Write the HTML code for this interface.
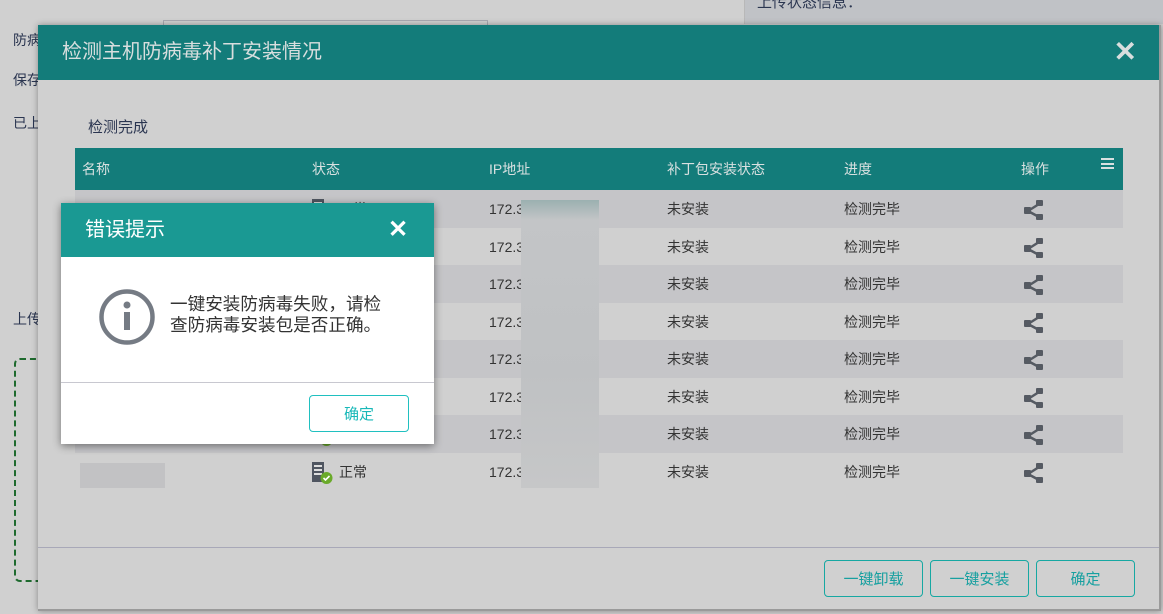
<!DOCTYPE html>
<html><head><meta charset="utf-8"><style>
*{margin:0;padding:0;box-sizing:border-box}
body{width:1163px;height:614px;overflow:hidden;background:#d0d0d0;position:relative;font-family:"Liberation Sans","Noto Sans CJK SC",sans-serif;color:#333;font-size:14px}
.abs{position:absolute}
.bgt{color:#2a3550;font-size:14px}
.modal{left:38px;top:25px;width:1123px;height:586px;background:#d0d0d0;box-shadow:0 0 6px rgba(0,0,0,.35);border-right:2px solid #9a9a9a;border-bottom:2px solid #9a9a9a}
.mh{left:0;top:0;width:100%;height:55px;background:#137c7a;color:#d8dede;font-size:20px;line-height:55px;padding-left:24px}
.th{left:37px;top:123px;width:1048px;height:42px;background:#137c7a;color:#d8e0e0;font-size:14px;line-height:42px}
.row{left:37px;width:1048px;height:37.5px;font-size:14px;color:#333;line-height:39px}
.btn{height:37px;border:1px solid #17a8a2;border-radius:4px;color:#17a0a0;font-size:15px;text-align:center;line-height:37px;width:99px}
.dlg{left:61px;top:203px;width:373px;height:241px;background:#fff;box-shadow:0 2px 8px rgba(0,0,0,.45)}
</style></head><body>
<div class="abs bgt" style="left:13px;top:30px">防病</div>
<div class="abs bgt" style="left:13px;top:70px">保存</div>
<div class="abs bgt" style="left:13px;top:113px">已上</div>
<div class="abs bgt" style="left:13px;top:309px">上传</div>
<div class="abs" style="left:163px;top:20px;width:325px;height:10px;border:1px solid #a8a8b0;border-bottom:none"></div>
<div class="abs" style="left:744px;top:0;width:419px;height:24px;background:#c0c2c6;border-left:1px solid #b8b8b8"></div>
<div class="abs bgt" style="left:757px;top:-9px;font-size:15px">上传状态信息：</div>
<div class="abs" style="left:14px;top:358px;width:40px;height:224px;border:2px dashed #1e6a2e;border-right:none;border-radius:6px 0 0 6px"></div>

<div class="abs modal">
 <div class="abs mh">检测主机防病毒补丁安装情况</div>
 <div class="abs" style="right:22px;top:13px;color:#d8dede;font-size:28px;line-height:28px;font-weight:bold">✕</div>
 <div class="abs" style="left:50px;top:91px;color:#2a3550;font-size:15px">检测完成</div>
 <div class="abs th">
  <span class="abs" style="left:7px">名称</span><span class="abs" style="left:237px">状态</span><span class="abs" style="left:414px">IP地址</span><span class="abs" style="left:592px">补丁包安装状态</span><span class="abs" style="left:769px">进度</span><span class="abs" style="left:946px">操作</span>
  <div class="abs" style="left:1026px;top:10px;width:13px;height:11px;border-top:2px solid #d8e0e0;border-bottom:2px solid #d8e0e0"><div style="margin-top:2.5px;height:2px;background:#d8e0e0"></div></div>
 </div>
 <div id="rows"></div>
 <div class="abs" style="left:483px;top:175px;width:78px;height:288px;background:linear-gradient(#9bb0b0,#c3c5c7 20px,#bfc1c3 60%,#c6c7c8)"></div>
 <div class="abs" style="left:42px;top:438px;width:85px;height:25px;background:#c2c2c4"></div>
 <div class="abs" style="left:0;top:522px;width:100%;height:1px;background:#a8a8b8"></div>
 <div class="abs btn" style="left:786px;top:535px">一键卸载</div>
 <div class="abs btn" style="left:892px;top:535px">一键安装</div>
 <div class="abs btn" style="left:998px;top:535px">确定</div>
</div>

<div class="abs dlg">
 <div class="abs" style="left:0;top:0;width:373px;height:54px;background:#1a9993;color:#fff;font-size:20px;line-height:54px;padding-left:24px">错误提示</div>
 <div class="abs" style="left:327px;top:13px;color:#fff;font-size:24px;font-weight:bold;line-height:28px">✕</div>
 <svg class="abs" style="left:37px;top:85px" width="58" height="58" viewBox="0 0 58 58"><circle cx="29" cy="29" r="25.5" fill="none" stroke="#757b84" stroke-width="4.5"/><circle cx="29" cy="17" r="3.5" fill="#757b84"/><rect x="26" y="24" width="6" height="18" fill="#757b84"/></svg>
 <div class="abs" style="left:109px;top:91px;width:225px;font-size:17.6px;line-height:21px;color:#333">一键安装防病毒失败，请检查防病毒安装包是否正确。</div>
 <div class="abs" style="left:0;top:179px;width:373px;height:1px;background:#c8c8d0"></div>
 <div class="abs btn" style="left:248px;top:192px;width:100px;height:37px;border-color:#20c0c0;color:#18b8b8">确定</div>
</div>
<script>
var h='';for(var i=0;i<8;i++){var t=165+i*37.5;var bg=i%2==0?'#c5c5c8':'#d0d0d0';
h+='<div class="abs row" style="top:'+t+'px;background:'+bg+'">'+
'<svg class="abs" style="left:236px;top:9px" width="22" height="22" viewBox="0 0 22 22"><rect x="1" y="0" width="12" height="20" fill="#4f5560"/><rect x="3" y="3" width="8" height="2" fill="#ddd"/><rect x="3" y="7" width="8" height="2" fill="#ddd"/><rect x="3" y="11" width="8" height="2" fill="#ddd"/><circle cx="15.5" cy="16" r="6" fill="#6aaa2a"/><path d="M12.5 16l2 2 4-4" stroke="#fff" stroke-width="1.6" fill="none"/></svg>'+
'<span class="abs" style="left:264px">正常</span><span class="abs" style="left:414px">172.3</span><span class="abs" style="left:592px">未安装</span><span class="abs" style="left:769px">检测完毕</span>'+
'<svg class="abs" style="left:948px;top:9px" width="22" height="22" viewBox="0 0 22 22"><path d="M5 12L16 5M5 12L16 18" stroke="#555a62" stroke-width="2.5"/><rect x="1" y="8" width="7" height="7" rx="1" fill="#555a62"/><rect x="13" y="1" width="7" height="6" rx="1" fill="#555a62"/><rect x="13" y="15" width="7" height="6" rx="1" fill="#555a62"/></svg></div>';}
document.getElementById('rows').outerHTML=h;
</script>
</body></html>
